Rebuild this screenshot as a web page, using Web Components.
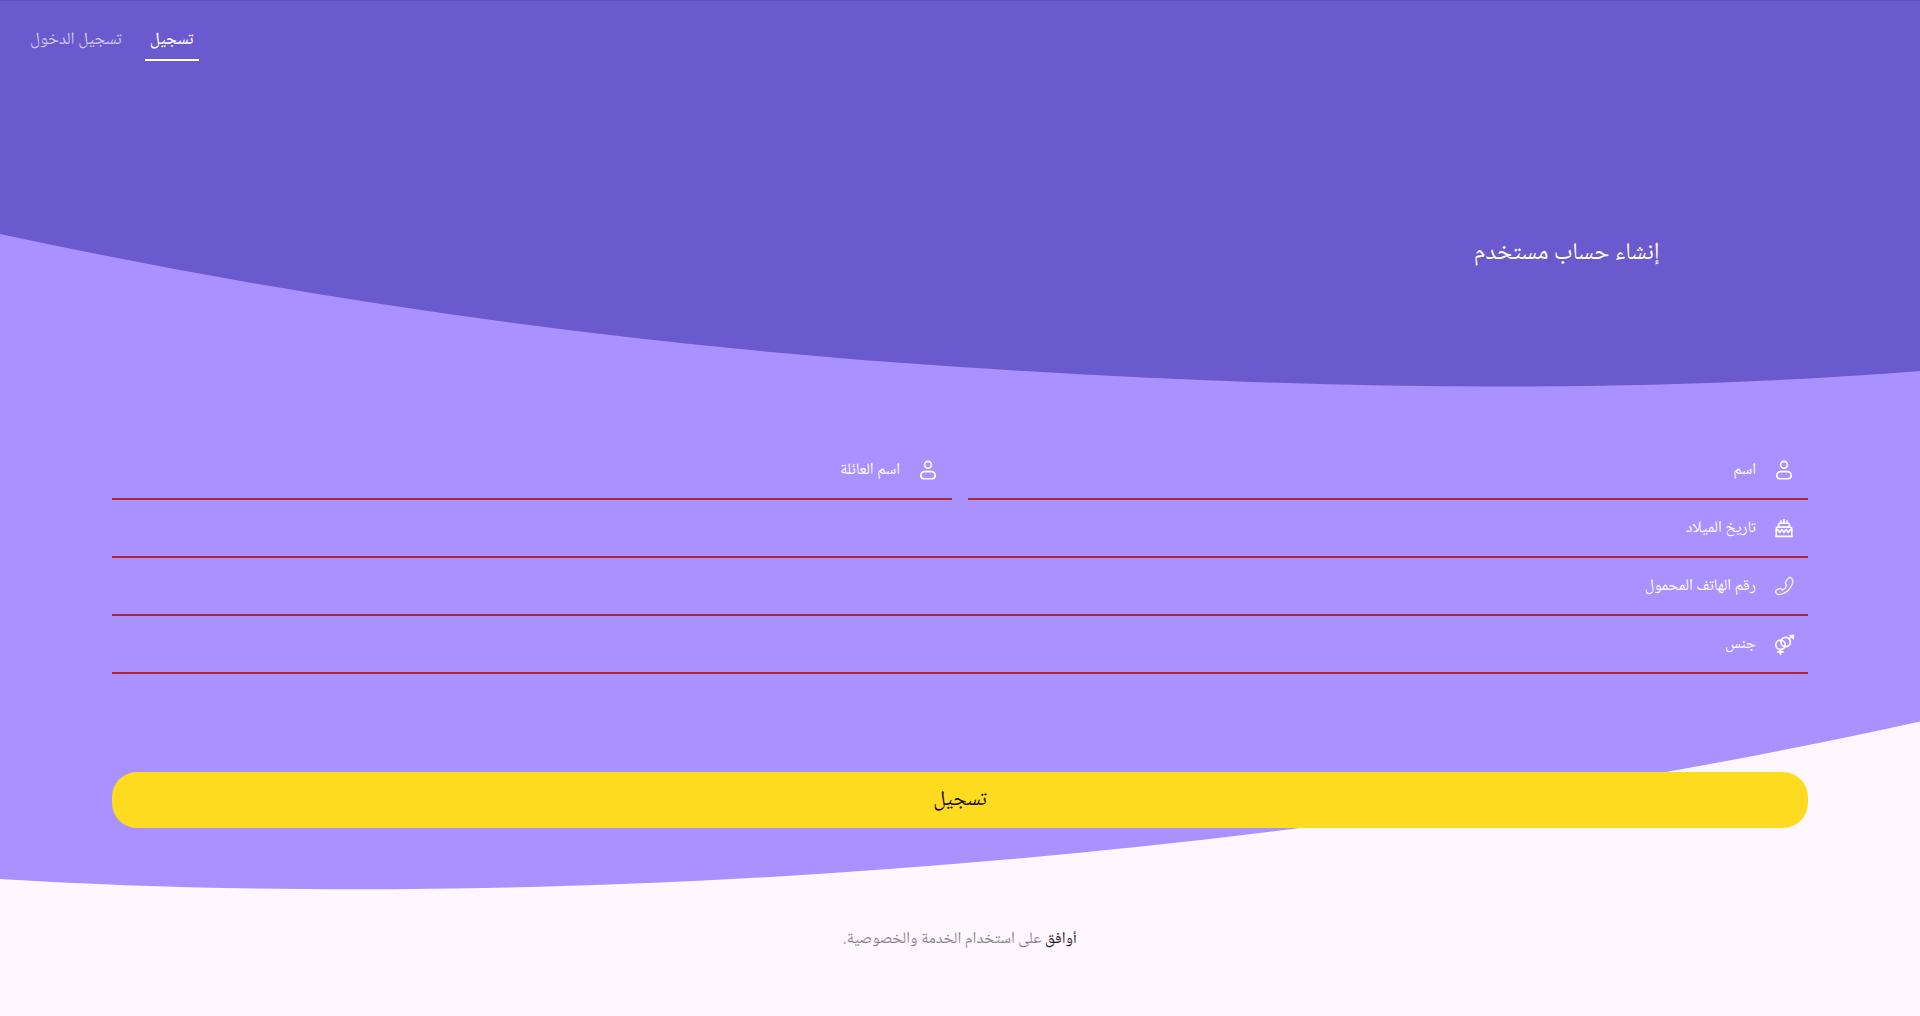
<!DOCTYPE html>
<html lang="ar" dir="rtl">
<head>
<meta charset="utf-8">
<title>إنشاء حساب مستخدم</title>
<style>
  html, body { margin: 0; }
  body {
    --deep: #6a5acd;
    --soft: #a992ff;
    --paper: #fef7ff;
    --accent: #ffdb1f;
    --line: #a82835;
    background: var(--paper);
    font-family: "Noto Naskh Arabic UI", "Noto Naskh Arabic", "Noto Sans", sans-serif;
  }
</style>
</head>
<body>
<signup-page></signup-page>
<script>
const ICONS = {
  user: '<circle cx="12" cy="6.8" r="3.4"/><path d="M8.6 13.6h6.8c2.2 0 3.8 1.9 3.8 4 0 1.9-1.3 3.2-3.2 3.2H8c-1.9 0-3.2-1.3-3.2-3.2 0-2.1 1.6-4 3.8-4z"/>',
  cake: '<path stroke-linecap="butt" d="M3.2 20.4h17.6M4.2 20.4v-7.4c0-1.1.8-1.9 1.9-1.9h11.8c1.1 0 1.9.8 1.9 1.9v7.4M6.6 11V8.6c0-.9.5-1.4 1.4-1.4h8c.9 0 1.4.5 1.4 1.4V11M9 6.8V4.2M12 6.8V3M15 6.8V4.2"/><path d="M4.4 14.5l1.3-1 2.1 3 2.1-3 2.1 3 2.1-3 2.1 3 2.1-3 1.3 1"/>',
  phone: '<path stroke-width="1.5" d="M15.9 4.6c.8-1.1 2.7-1.5 3.7-.4 1.5 1.6 1.2 5.3-.6 8.500-2 3.600-5.200 6.200-8.600 7.200-2.600.8-5.400.6-6.400-1-.8-1.300-.1-2.900 1.200-3.400l2.200-.8c.9-.3 1.800-.1 2.400.6l.7.7c1.900-.9 3.600-2.700 4.300-4.700l-.8-.8c-.6-.7-.8-1.600-.4-2.400z" opacity=".8"/>',
  gender: '<g stroke-width="1.7"><circle cx="8.5" cy="12.8" r="4.7"/><circle cx="13.6" cy="10" r="4.7"/><path d="M8.5 17.5v4.700M5.900 19.900h5.200M16.900 6.700l3.300-2.600"/></g><path fill="currentColor" stroke-width="1" d="M17.800 3.500l4-.5-.2 3.900z"/>'
};

const define = (name, markup, setup) => {
  const template = document.createElement('template');
  template.innerHTML = markup;
  customElements.define(name, class extends HTMLElement {
    constructor() {
      super();
      this.attachShadow({ mode: 'open' }).append(template.content.cloneNode(true));
    }
    connectedCallback() { if (setup) setup(this, this.shadowRoot); }
  });
};

define('line-icon', `
  <style>
    :host { display: block; width: 24px; height: 24px; flex: none; }
    svg { display: block; width: 100%; height: 100%; fill: none; stroke: currentColor; stroke-width: 1.6; stroke-linecap: round; stroke-linejoin: round; }
  </style>
  <svg viewBox="0 0 24 24" aria-hidden="true"></svg>`,
  (el, root) => { root.querySelector('svg').innerHTML = ICONS[el.getAttribute('name')]; });

define('wave-backdrop', `
  <style>
    :host { display: block; }
    svg { display: block; width: 100%; height: 100%; }
    .soft { fill: var(--soft); }
    .deep { fill: var(--deep); }
    .edge { fill: #5f4fc0; }
  </style>
  <svg viewBox="0 0 1920 1016" preserveAspectRatio="none" aria-hidden="true">
    <path class="soft" d="M0 0V879C520 911 1240 871 1920 721.5V0Z"/>
    <path class="deep" d="M0 0V234Q470 335 960 367C1280 388 1600 396 1920 371V0Z"/>
    <rect class="edge" width="1920" height="1"/>
  </svg>`);

define('nav-tab', `
  <style>
    :host { display: block; }
    a { display: block; padding: 2px 5px 0; color: rgba(255,255,255,.68); font-size: 17px; line-height: 38px; text-decoration: none; border-bottom: 2px solid transparent; }
    :host([active]) a { color: #fff; font-weight: 500; border-color: #fff; }
  </style>
  <a href="#"><slot></slot></a>`);

define('form-field', `
  <style>
    :host { display: block; flex: 1; min-width: 0; }
    .row { display: flex; align-items: center; gap: 16px; height: 56px; padding: 0 12px; border-bottom: 2px solid var(--line); color: #fff; }
    label { font-size: 16px; line-height: 24px; white-space: nowrap; }
    input, select { flex: 1; min-width: 0; height: 40px; padding: 0; border: 0; outline: 0; background: transparent; color: inherit; font: inherit; appearance: none; }
    option { color: #222; }
  </style>
  <div class="row"><label for="control"><slot></slot></label></div>`,
  (el, root) => {
    const row = root.querySelector('.row');
    const icon = document.createElement('line-icon');
    icon.setAttribute('name', el.getAttribute('icon'));
    row.prepend(icon);
    const kind = el.getAttribute('kind') || 'text';
    const control = document.createElement(kind === 'select' ? 'select' : 'input');
    control.id = 'control';
    if (kind === 'select') control.append(new Option('', ''));
    else control.type = kind;
    row.append(control);
  });

define('primary-button', `
  <style>
    :host { display: block; }
    button { display: block; width: 100%; height: 56px; padding: 0; border: 0; border-radius: 25px; background: var(--accent); color: #111; font: inherit; font-size: 21px; line-height: 32px; }
  </style>
  <button type="button"><slot></slot></button>`);

define('signup-page', `
  <style>
    :host { display: flex; flex-direction: column; position: relative; min-height: 100vh; }
    wave-backdrop { position: absolute; inset: 0; z-index: -1; }
    nav { display: flex; direction: ltr; align-items: center; gap: 18px; padding: 19px 25px 0; }
    nav nav-tab { direction: rtl; }
    h1 { margin: 0; padding: 172px 260px 0; color: #fff; font-size: 24px; line-height: 40px; font-weight: 400; }
    form { display: flex; flex-direction: column; padding: 169px 112px 0; }
    .pair { display: flex; gap: 16px; }
    primary-button { margin-top: 98px; }
    p { margin: 0; padding: 95px 24px 61px; text-align: center; color: #87838a; font-size: 16px; line-height: 32px; }
    p a { color: #1b1a1d; text-decoration: none; }
  </style>
  <wave-backdrop></wave-backdrop>
  <nav><nav-tab>تسجيل الدخول</nav-tab><nav-tab active>تسجيل</nav-tab></nav>
  <h1>إنشاء حساب مستخدم</h1>
  <form>
    <div class="pair">
      <form-field icon="user">اسم</form-field>
      <form-field icon="user">اسم العائلة</form-field>
    </div>
    <form-field icon="cake">تاريخ الميلاد</form-field>
    <form-field icon="phone" kind="tel">رقم الهاتف المحمول</form-field>
    <form-field icon="gender" kind="select">جنس</form-field>
    <primary-button>تسجيل</primary-button>
  </form>
  <p><a href="#">أوافق</a> على استخدام الخدمة والخصوصية.</p>`);
</script>
</body>
</html>
